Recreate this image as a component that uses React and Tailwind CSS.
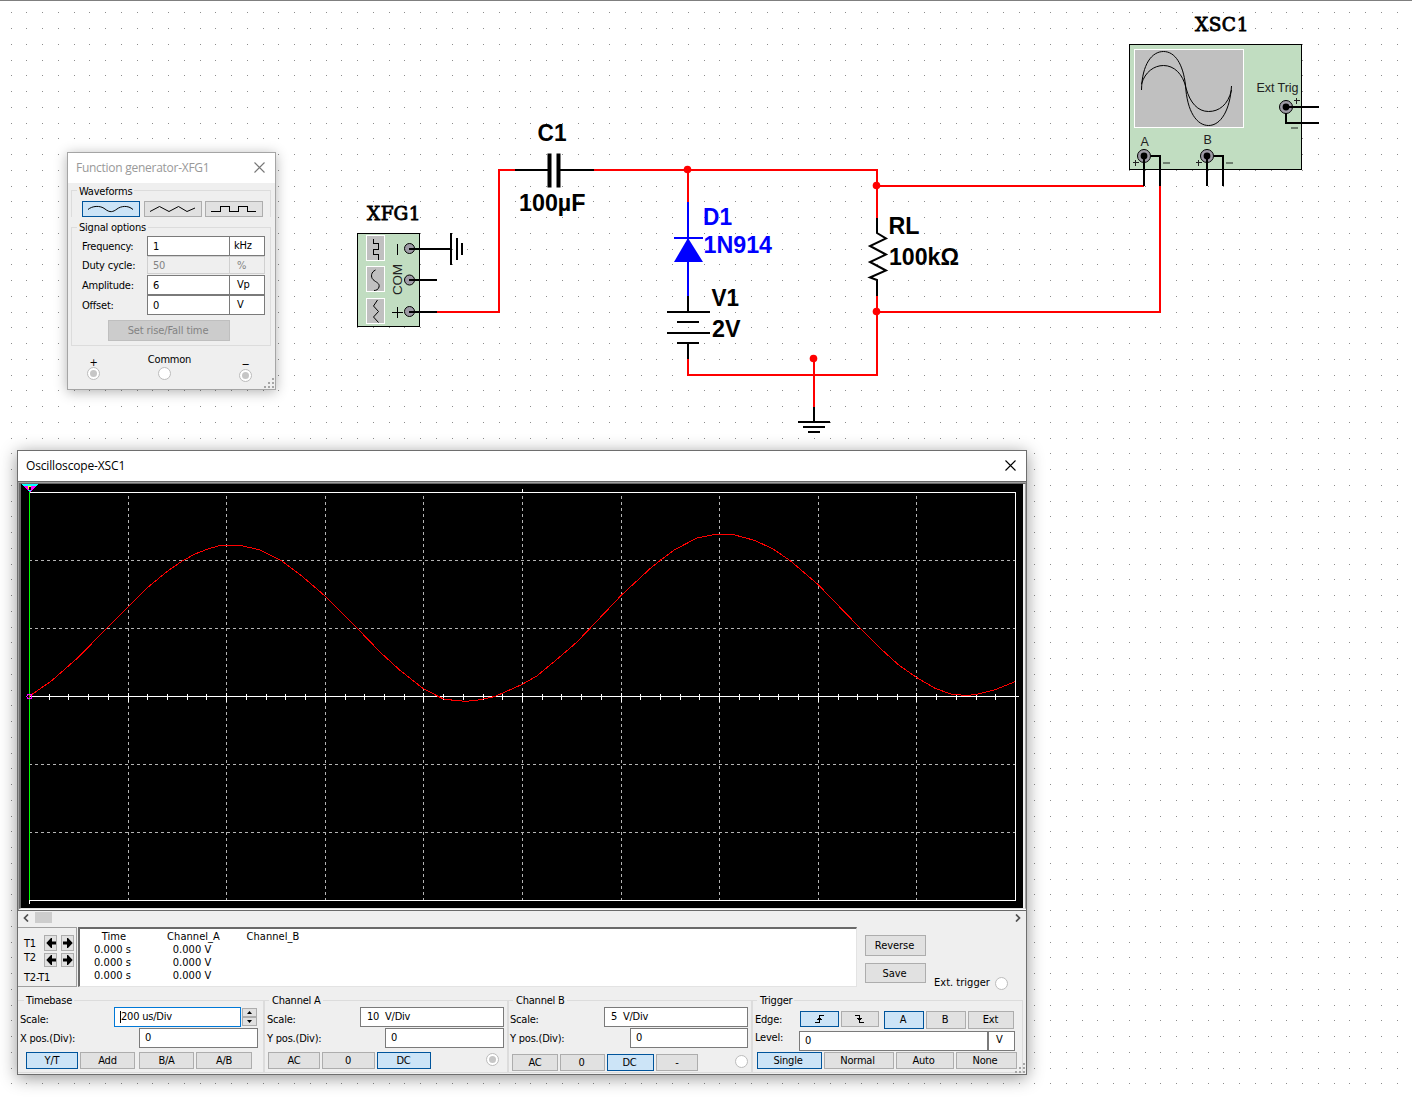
import React from "react";

const dots = (() => {
  let d = "";
  for (let j = 0; j < 69; j++)
    for (let i = 0; i < 89; i++)
      d += `M${Math.round(10.5 + 15.75 * i)} ${Math.round(12.25 + 15.75 * j)}h1v1h-1z`;
  return d;
})();

const trace = [
  [29, 696.5], [51.7, 680.7], [78.3, 657.3], [106.7, 628.3], [128.3, 606.7], [146.7, 588.3], [166.7, 571.7],
  [182.7, 560.7], [195, 554], [208, 549], [220, 545.5], [241, 545.5], [260, 550], [282, 561], [303, 577],
  [325, 596], [357, 628], [380, 652], [400, 670.3], [423.3, 688.7], [443, 698.8], [455, 700.5], [466.7, 701.3],
  [478, 700], [495, 696.5], [522.3, 684.3], [536.7, 676], [555, 661], [576.7, 642.3], [590.3, 628], [621.3, 595.3],
  [650, 568.7], [660, 560.5], [675, 549.5], [697, 538], [714, 534.5], [733, 534.5], [755, 540.5], [773, 549],
  [790, 560.5], [818, 584.5], [860, 628], [880, 648], [898.3, 664.7], [916.3, 677.3], [935, 688.3],
  [951.7, 694.3], [967.3, 695.5], [978, 694], [995, 689.7], [1015, 681.7],
].map((p) => p.join(",")).join(" ");

const ui = "font-['DejaVu_Sans_Condensed','DejaVu_Sans',sans-serif] text-[11px] leading-[14px] tracking-[-0.22px] text-black whitespace-pre";

const Wire = ({ d, c = "#f00", w = 2 }) => <path d={d} stroke={c} strokeWidth={w} fill="none" shapeRendering="crispEdges" />;
const Node = ({ x, y }) => <circle cx={x} cy={y} r="3.8" fill="#f00" />;
const Label = ({ x, y, w, c = "#000", children }) => (
  <text x={x} y={y} fill={c} textLength={w} lengthAdjust="spacingAndGlyphs" className="font-['Liberation_Sans',Arial,sans-serif] text-[23.5px] font-bold">{children}</text>
);
const Ref = ({ x, y, children }) => (
  <text x={[0, 1, 2, 3].map((i) => x + 7 + i * 13.7).join(" ")} y={y} textAnchor="middle" stroke="#000" strokeWidth="0.8" className="font-['DejaVu_Serif',serif] text-[18.5px]">{children}</text>
);
const Pin = ({ y }) => <circle cx="409.5" cy={y} r="5" fill="#9d9aa5" stroke="#000" />;
const Jack = ({ x, y }) => (
  <g><circle cx={x} cy={y} r="6.5" fill="#9d9aa5" stroke="#000" /><circle cx={x} cy={y} r="3.4" /></g>
);

function Schematic() {
  return (
    <svg className="absolute inset-0" width="1412" height="1097">
      <path d={dots} fill="#8c8c8c" shapeRendering="crispEdges" />
      <rect width="1412" height="1" fill="#7f7f7f" />

      <Ref x={366.5} y="220">XFG1</Ref>
      <rect x="357.5" y="233.5" width="62" height="93" fill="#c1ddc1" stroke="#000" />
      <g fill="#c0c0c0" stroke="#fff">
        <rect x="366.5" y="235.5" width="18" height="25" />
        <rect x="366.5" y="266.5" width="18" height="25" />
        <rect x="366.5" y="298.5" width="18" height="25" />
      </g>
      <g fill="none" stroke="#000">
        <path d="M373.500 239v4.500h5v6h-5v5h5v5" shapeRendering="crispEdges" />
        <path d="M375.500 270C371 272 370.500 277 373 279.500C376 282.500 380 283 379 287C378.500 289.500 376 290.500 374 290.500" />
        <path d="M377.500 300L373.500 306L378.500 311.500L373.500 317L378.500 322.500" />
        <path d="M397.500 244v11M392 312.500h11M397.500 307v11" shapeRendering="crispEdges" />
      </g>
      <text transform="translate(401.500 295) rotate(-90)" fill="#222" textLength="31" className="font-['Liberation_Sans',sans-serif] text-[13.500px]">COM</text>
      <Pin y="248.500" /><Pin y="280" /><Pin y="311.500" />
      <Wire c="#000" d="M409 249H451M451 233V265M457 238V260M462 243V255M409 280H437M409 312H437" />

      <Wire d="M437 312H499V170H516M593 170H877V218M688 170V202M877 186H1144M1160 186V312H877M877 296V375H688V359M814 358V407" />
      <Wire c="#000" d="M515 170H549M559 170H594" />
      <path d="M547.500 153.500h4v34h-4zM556.500 153.500h4v34h-4z" />
      <Label x="537.500" y="141" w="29">C1</Label>
      <Label x="519" y="211" w="66.500">100µF</Label>

      <Wire c="#00f" d="M688 202V296M674 238H703" />
      <path d="M688 238L703 262H674Z" fill="#00f" />
      <Label x="703" y="225" w="29" c="#00f">D1</Label>
      <Label x="703.500" y="253" w="68.500" c="#00f">1N914</Label>
      <Wire c="#000" d="M688 296V312M667 312H710M677 322H699M667 333H710M677 343H699M688 343V359" />
      <Label x="711.500" y="305.500" w="27.500">V1</Label>
      <Label x="712" y="337" w="28.500">2V</Label>

      <path d="M877 218V233L886 238.500L870 246L886 254.500L870 262L886 270.500L870 277.500L877 280V296" fill="none" stroke="#000" strokeWidth="2" />
      <Label x="888.500" y="233.500" w="31">RL</Label>
      <Label x="889" y="265" w="70">100kΩ</Label>
      <Wire c="#000" d="M814 407V422M798 422H830M803 427H825M808 432H820" />
      <Node x="687.500" y="169.500" /><Node x="876.500" y="185.500" /><Node x="876.500" y="311.500" /><Node x="813.500" y="358.500" />

      <Ref x={1194.5} y="31.300">XSC1</Ref>
      <rect x="1129.500" y="44.500" width="172" height="125" fill="#c1ddc1" stroke="#000" />
      <rect x="1134.500" y="49.500" width="109" height="78" fill="#c0c0c0" stroke="#fff" />
      <g fill="none" stroke="#000">
        <path d="M1141.500 90C1142 64 1152 51.500 1163.500 51.500C1175 51.500 1183 64 1185.500 85C1187 112 1197 125.500 1208.500 125.500C1221 125.500 1230 110 1231.500 86" />
        <path d="M1141.500 84C1145 72 1154 65.500 1163.500 65.500C1174 65.500 1183 74 1186 88C1190 103 1198 111.500 1208.500 111.500C1219 111.500 1228 105 1231.500 90" />
      </g>
      <g fill="#222" className="font-['Liberation_Sans',sans-serif] text-[12.5px]">
        <text x="1256.500" y="91.500" textLength="42">Ext Trig</text>
        <text x="1140.500" y="146">A</text>
        <text x="1203.500" y="144">B</text>
      </g>
      <Jack x="1286" y="107" /><Jack x="1144" y="156" /><Jack x="1207" y="156" />
      <Wire c="#000" d="M1286 107H1319M1286 113V123H1319M1144 156V186M1151 156H1160V186M1207 156V186M1214 156H1223V186" />
      <path d="M1294 100.500h6M1296.500 98v6M1132.500 162.500h6M1135.500 160v6M1195.500 162.500h6M1198.500 160v6" stroke="#222" shapeRendering="crispEdges" />
      <path d="M1291 128h7M1163 163h7M1226 163h7" stroke="#6f8070" strokeWidth="2" shapeRendering="crispEdges" />
    </svg>
  );
}

function Btn({ active, disabled, className = "", children }) {
  const tone = active
    ? "border-[#00549b] bg-[#cce4f7] "
    : disabled
      ? "border-[#bfbfbf] bg-[#cccccc] text-[#838383] "
      : "border-[#adadad] bg-[#e1e1e1] ";
  return <div className={"flex shrink-0 items-center justify-center border " + tone + className}>{children}</div>;
}
function Field({ className = "", children }) {
  return <div className={"flex shrink-0 items-center border border-[#7a7a7a] bg-white " + className}>{children}</div>;
}
const Radio = ({ on, className = "" }) => (
  <div className={"flex size-[13px] shrink-0 items-center justify-center rounded-full border border-[#bcbcbc] bg-white " + className}>
    {on && <div className="size-[7px] rounded-full bg-[#c6c6c6]" />}
  </div>
);
const Close = ({ color }) => (
  <svg width="11" height="11" className="mb-[2px] mr-px"><path d="M.5.5l10 10M10.500.5l-10 10" stroke={color} strokeWidth="1.100" /></svg>
);
const Grip = ({ className }) => (
  <svg width="11" height="11" className={className} fill="#a6a6a6" shapeRendering="crispEdges">
    <path d="M8 0h2v2h-2zM8 4h2v2h-2zM4 4h2v2h-2zM8 8h2v2h-2zM4 8h2v2h-2zM0 8h2v2h-2z" />
  </svg>
);
const Legend = ({ children, className = "pt-[2px]" }) => (
  <div className="flex h-[14px] items-center">
    <div className="mt-px h-px w-[6px] bg-[#dcdcdc]" />
    <span className={"px-[2px] " + className}>{children}</span>
    <div className="mt-px h-px flex-1 bg-[#dcdcdc]" />
  </div>
);

function Param({ label, value, unit, off }) {
  const box = off ? "h-[18px] border-[#d0d0d0]! bg-[#efefef]! text-[#838383]" : "h-[20px]";
  return (
    <div className="flex items-center">
      <span className="w-[75px] pl-[10px] pt-[2px]">{label}</span>
      <Field className={"w-[83px] pl-[5px] pt-px " + box}>{value}</Field>
      <Field className={"-ml-px w-[36px] " + (unit === "kHz" ? "pb-px pl-[4px] " : off ? "pl-[7px] pt-px " : "pb-px pl-[7px] ") + box}>{unit}</Field>
    </div>
  );
}

function FunctionGenerator() {
  return (
    <div className={"absolute left-[67px] top-[152px] flex h-[238px] w-[209px] flex-col border border-[#a5a5a5] bg-[#efefef] shadow-[0_2px_12px_rgba(0,0,0,0.3)] " + ui}>
      <div className="flex h-[30px] items-center justify-between bg-white pl-[8px] pr-[9px]">
        <span className="font-['Open_Sans','Noto_Sans',sans-serif] text-[12px] tracking-[-0.27px] text-[#999]">Function generator-XFG1</span>
        <Close color="#777" />
      </div>
      <div className="ml-[3px] flex w-[200px] flex-col">
        <Legend className="pt-[3px]">Waveforms</Legend>
        <div className="-mt-[7px] flex flex-col border-x border-[#dcdcdc] pt-[11px]">
          <div className="flex gap-[4px] pl-[10px]">
            <Btn active className="h-[16px] w-[58px]">
              <svg width="46" height="8" fill="none" stroke="#000"><path d="M0 4.500C4 1 12 0 17 4S25 7 29 4S40 0 45 4.500" /></svg>
            </Btn>
            <Btn className="h-[16px] w-[58px]">
              <svg width="46" height="8" fill="none" stroke="#000"><path d="M0 6.500L9.500 1.500L19 6.500L28.500 1.500L37 6.500L45 3" /></svg>
            </Btn>
            <Btn className="-ml-px h-[16px] w-[58px]">
              <svg width="46" height="8" fill="none" stroke="#000" shapeRendering="crispEdges"><path d="M0 6.500H9.500V1.500H18.500V6.500H27.500V1.500H36.500V6.500H45" /></svg>
            </Btn>
          </div>
        </div>
        <div className="mt-[3px] flex flex-col">
          <Legend>Signal options</Legend>
          <div className="-mt-[7px] flex h-[119px] flex-col border-x border-b border-[#dcdcdc] pt-[9px]">
            <Param label="Frequency:" value="1" unit="kHz" />
            <Param label="Duty cycle:" value="50" unit="%" off />
            <div className="h-px" />
            <Param label="Amplitude:" value="6" unit="Vp" />
            <Param label="Offset:" value="0" unit="V" />
            <Btn disabled className="ml-[36px] mt-[5px] h-[21px] w-[122px] pr-[2px] pt-px tracking-[-0.1px]">Set rise/Fall time</Btn>
          </div>
        </div>
      </div>
      <div className="flex items-start justify-between pl-[19px] pr-[23px] pt-[7px]">
        <div className="flex flex-col items-center pt-[4px]"><span className="h-[10px] leading-[12px]">+</span><Radio on /></div>
        <div className="flex flex-col items-center"><span>Common</span><Radio className="mr-[10px]" /></div>
        <div className="flex flex-col items-center pt-[6px]"><span className="h-[10px] leading-[12px]">−</span><Radio on /></div>
      </div>
      <Grip className="absolute bottom-0 right-0" />
    </div>
  );
}

function Plot() {
  const vx = [128, 226, 325, 423, 522, 621, 719, 818, 916];
  const ticks = Array.from({ length: 51 }, (_, i) => Math.round(29 + i * 19.72));
  return (
    <svg width="1002" height="424" viewBox="21 484 1002 424" className="block bg-black" shapeRendering="crispEdges" fill="none">
      <g stroke="#b4b4b4" strokeDasharray="3 3">
        {vx.map((x) => <path key={x} d={`M${x + 0.5} 496V900`} />)}
        {[560, 628, 764, 832].map((y) => <path key={y} d={`M29 ${y + 0.5}H1015`} />)}
      </g>
      <path d="M29 492.500H1015.500V900.500H29M522.500 489V492M29 696.500H1019" stroke="#fff" />
      {ticks.map((x, i) => <path key={x} d={i % 5 ? `M${x + 0.5} 694V700` : `M${x + 0.5} 693V702`} stroke="#fff" />)}
      <path d="M29.500 900V904" stroke="#fff" />
      <path d="M29.500 492V900" stroke="#0f0" />
      <polyline points={trace} stroke="#f00" />
      <path d="M21 484H38L36 486H23Z" fill="#0ff" />
      <path d="M23 486H36L30 492H29Z" fill="#f0f" />
      <path d="M28 486h3v1h-3zM28 487h1v2h-1z" fill="#ff0" />
      <path d="M29 487h2v3h-2z" fill="#000" />
      <path d="M28 490h3v1h-3z" fill="#0ff" />
      <circle cx="29.500" cy="696.500" r="2.500" stroke="#f0f" />
    </svg>
  );
}

const Arrow = ({ flip }) => (
  <svg width="10" height="10" className={"shrink-0 " + (flip ? "-scale-x-100" : "")}><path d="M.3 5L5 0H6V3.500H10V6.500H6V10H5Z" /></svg>
);
const Chevron = ({ flip }) => (
  <svg width="6" height="8" className={flip ? "-scale-x-100" : ""}><path d="M5 .5L1.500 4L5 7.500" fill="none" stroke="#505050" strokeWidth="1.700" /></svg>
);

function Channel({ name, scale, width, labelPad, scaleW, posW, children }) {
  return (
    <div className={"flex h-[79px] shrink-0 flex-col " + width}>
      <Legend className="pl-[3px] pr-[2px] pt-[2px]">{name}</Legend>
      <div className="-mt-[7px] flex flex-1 flex-col border-l-2 border-[#dcdcdc] pt-[7px]">
        <div className="flex h-[20px] items-center justify-between pr-[3px]">
          <span className={"pt-[5px] " + labelPad}>Scale:</span>
          <Field className={"h-[20px] pl-[6px] " + scaleW}>{scale}</Field>
        </div>
        <div className="mt-px flex h-[20px] items-center justify-between pr-[3px]">
          <span className={"pt-px " + labelPad}>Y pos.(Div):</span>
          <Field className={"h-[20px] pl-[5px] " + posW}>0</Field>
        </div>
        {children}
      </div>
    </div>
  );
}

function Oscilloscope() {
  return (
    <div className={"absolute left-[17px] top-[450px] flex h-[625px] w-[1010px] flex-col border border-[#6e6e6e] bg-[#efefef] shadow-[0_3px_16px_rgba(0,0,0,0.42)] " + ui}>
      <div className="flex h-[30px] shrink-0 items-center justify-between bg-white pl-[8px] pr-[9px]">
        <span className="font-['Open_Sans','Noto_Sans',sans-serif] text-[12px] tracking-[-0.15px]">Oscilloscope-XSC1</span>
        <Close color="#000" />
      </div>
      <div className="h-px shrink-0 bg-[#696969]" />
      <div className="flex shrink-0 flex-col border-l border-t border-[#a0a0a0]">
        <div className="border-b border-l-2 border-r border-t border-[#696969] border-b-[#e3e3e3]! border-r-[#a0a0a0]! pr-px">
          <Plot />
        </div>
        <div className="h-px bg-white" />
      </div>
      <div className="h-px shrink-0 bg-[#696969]" />

      <div className="flex h-[16px] shrink-0 items-start justify-between pl-[5px] pr-[5px] pt-px">
        <div className="flex items-center gap-[6px]"><Chevron /><div className="h-[11px] w-[17px] bg-[#cdcdcd]" /></div>
        <div className="pt-[2px]"><Chevron flip /></div>
      </div>

      <div className="flex h-[60px] shrink-0">
        <div className="flex w-[59px] border-b border-r border-t border-[#a0a0a0] pl-[6px]">
          <div className="flex w-[20px] flex-col">
            <span className="mt-[9px]">T1</span>
            <span>T2</span>
            <span className="mt-[6px]">T2-T1</span>
          </div>
          <div className="mt-[7px] grid h-[32px] grid-cols-2 gap-x-[4px] gap-y-[2px]">
            <Btn className="h-[16px] w-[13px]"><Arrow /></Btn><Btn className="h-[16px] w-[13px]"><Arrow flip /></Btn>
            <Btn className="h-[14px] w-[13px]"><Arrow /></Btn><Btn className="h-[14px] w-[13px]"><Arrow flip /></Btn>
          </div>
        </div>
        <div className="ml-px flex w-[779px] border-l-2 border-t-2 border-b border-r border-[#696969] border-b-[#e3e3e3]! border-r-[#e3e3e3]! bg-white pt-px text-center leading-[13px] tracking-[0.05px]">
          <div className="flex w-[65px] flex-col"><span className="pl-[3px]">Time</span><span>0.000 s</span><span>0.000 s</span><span>0.000 s</span></div>
          <div className="flex w-[94px] flex-col"><span className="pl-[3px]">Channel_A</span><span>0.000 V</span><span>0.000 V</span><span>0.000 V</span></div>
          <div className="w-[68px]">Channel_B</div>
        </div>
        <div className="ml-[8px] flex flex-col gap-[7px] pt-[8px]">
          <Btn className="h-[21px] w-[61px] pr-[2px] pt-px tracking-[-0.05px]">Reverse</Btn>
          <Btn className="h-[20px] w-[61px] pr-[2px] pt-px tracking-[-0.05px]">Save</Btn>
        </div>
        <div className="-mb-[3px] ml-[8px] flex items-center gap-[5px] self-end"><span className="tracking-[0.02px]">Ext. trigger</span><Radio /></div>
      </div>

      <div className="mt-[6px] flex h-[80px] shrink-0">
        <div className="flex w-[245px] shrink-0 flex-col">
          <Legend>Timebase</Legend>
          <div className="flex h-[20px] items-center">
            <span className="w-[96px] pl-[2px] pt-[5px]">Scale:</span>
            <Field className="h-[20px] w-[127px] border-[#0078d7]! pl-[5px]"><span className="h-[12px] w-px bg-black" /><span>200 us/Div</span></Field>
            <div className="ml-px flex flex-col">
              <Btn className="h-[9px] w-[15px]"><svg width="5" height="3"><path d="M0 3L2.500 0L5 3Z" /></svg></Btn>
              <Btn className="h-[9px] w-[15px]"><svg width="5" height="3"><path d="M0 0L2.500 3L5 0Z" /></svg></Btn>
            </div>
          </div>
          <div className="mt-px flex items-center">
            <span className="w-[121px] pl-[2px] pt-px">X pos.(Div):</span>
            <Field className="h-[20px] w-[119px] pl-[5px]">0</Field>
          </div>
          <div className="mt-[4px] flex pl-[8px]">
            <Btn active className="h-[17px] w-[52px]">Y/T</Btn>
            <Btn className="ml-[2px] h-[17px] w-[55px]">Add</Btn>
            <Btn className="ml-[4px] h-[17px] w-[55px]">B/A</Btn>
            <Btn className="ml-[2px] h-[17px] w-[56px]">A/B</Btn>
          </div>
          <div className="mt-[3px] h-px bg-[#dcdcdc]" />
        </div>
        <Channel name="Channel A" scale="10  V/Div" width="w-[244px]" labelPad="pl-[2px]" scaleW="w-[144px]" posW="w-[119px]">
          <div className="flex items-start border-b border-[#dcdcdc] pb-[3px] pl-[3px] pt-[4px]">
            <Btn className="h-[17px] w-[52px]">AC</Btn>
            <Btn className="ml-[2px] h-[17px] w-[53px] pr-px">0</Btn>
            <Btn active className="ml-[2px] h-[17px] w-[54px] pr-px">DC</Btn>
            <Radio on className="ml-[55px] mt-px" />
          </div>
        </Channel>
        <Channel name="Channel B" scale="5  V/Div" width="w-[244px]" labelPad="pl-[1px]" scaleW="w-[144px]" posW="w-[118px]">
          <div className="flex items-start border-b border-[#dcdcdc] pb-px pl-[3px] pt-[6px]">
            <Btn className="h-[17px] w-[46px]">AC</Btn>
            <Btn className="ml-[2px] h-[17px] w-[45px] pr-[2px]">0</Btn>
            <Btn active className="ml-[2px] h-[17px] w-[47px] pr-[2px]">DC</Btn>
            <Btn className="ml-[2px] h-[17px] w-[42px]">-</Btn>
            <Radio className="ml-[37px] mt-px" />
          </div>
        </Channel>
        <div className="flex w-[272px] shrink-0 flex-col">
          <Legend className="pl-[3px] pr-[2px] pt-[2px]">Trigger</Legend>
          <div className="-mt-[7px] flex flex-1 flex-col border-l-2 border-r border-[#dcdcdc]">
            <div className="mt-[11px] flex h-[18px] items-start">
              <span className="w-[47px] pl-[2px] pt-[2px]">Edge:</span>
              <Btn active className="h-[16px] w-[39px]">
                <svg width="10" height="10" fill="none" stroke="#000"><path d="M0 8.500H4.500V1.500H9M2 5.500H7M3 4.500H6" shapeRendering="crispEdges" /></svg>
              </Btn>
              <Btn className="ml-[2px] h-[16px] w-[38px]">
                <svg width="10" height="10" fill="none" stroke="#000"><path d="M0 1.500H4.500V8.500H9M2 4.500H7M3 5.500H6" shapeRendering="crispEdges" /></svg>
              </Btn>
              <Btn active className="ml-[5px] h-[18px] w-[40px] pr-[2px]">A</Btn>
              <Btn className="ml-[2px] h-[18px] w-[40px] pr-[2px]">B</Btn>
              <Btn className="ml-[2px] h-[18px] w-[46px] pr-px">Ext</Btn>
            </div>
            <div className="mt-[2px] flex h-[20px] items-start">
              <span className="w-[46px] pl-[2px]">Level:</span>
              <Field className="h-[20px] w-[189px] pl-[5px]">0</Field>
              <Field className="h-[20px] w-[27px] pb-[2px] pl-[7px]">V</Field>
            </div>
            <div className="mt-px flex border-b border-[#dcdcdc] pb-[3px] pl-[4px]">
              <Btn active className="h-[17px] w-[65px] pr-[3px]">Single</Btn>
              <Btn className="ml-[2px] h-[17px] w-[70px] pr-[3px]">Normal</Btn>
              <Btn className="ml-[2px] h-[17px] w-[58px] pr-[3px]">Auto</Btn>
              <Btn className="ml-[2px] h-[17px] w-[61px] pr-[3px]">None</Btn>
            </div>
          </div>
        </div>
      </div>
      <Grip className="absolute bottom-0 right-0" />
    </div>
  );
}

export default function App() {
  return (
    <div className="relative h-[1097px] w-[1412px] overflow-hidden bg-white">
      <Schematic />
      <FunctionGenerator />
      <Oscilloscope />
    </div>
  );
}
